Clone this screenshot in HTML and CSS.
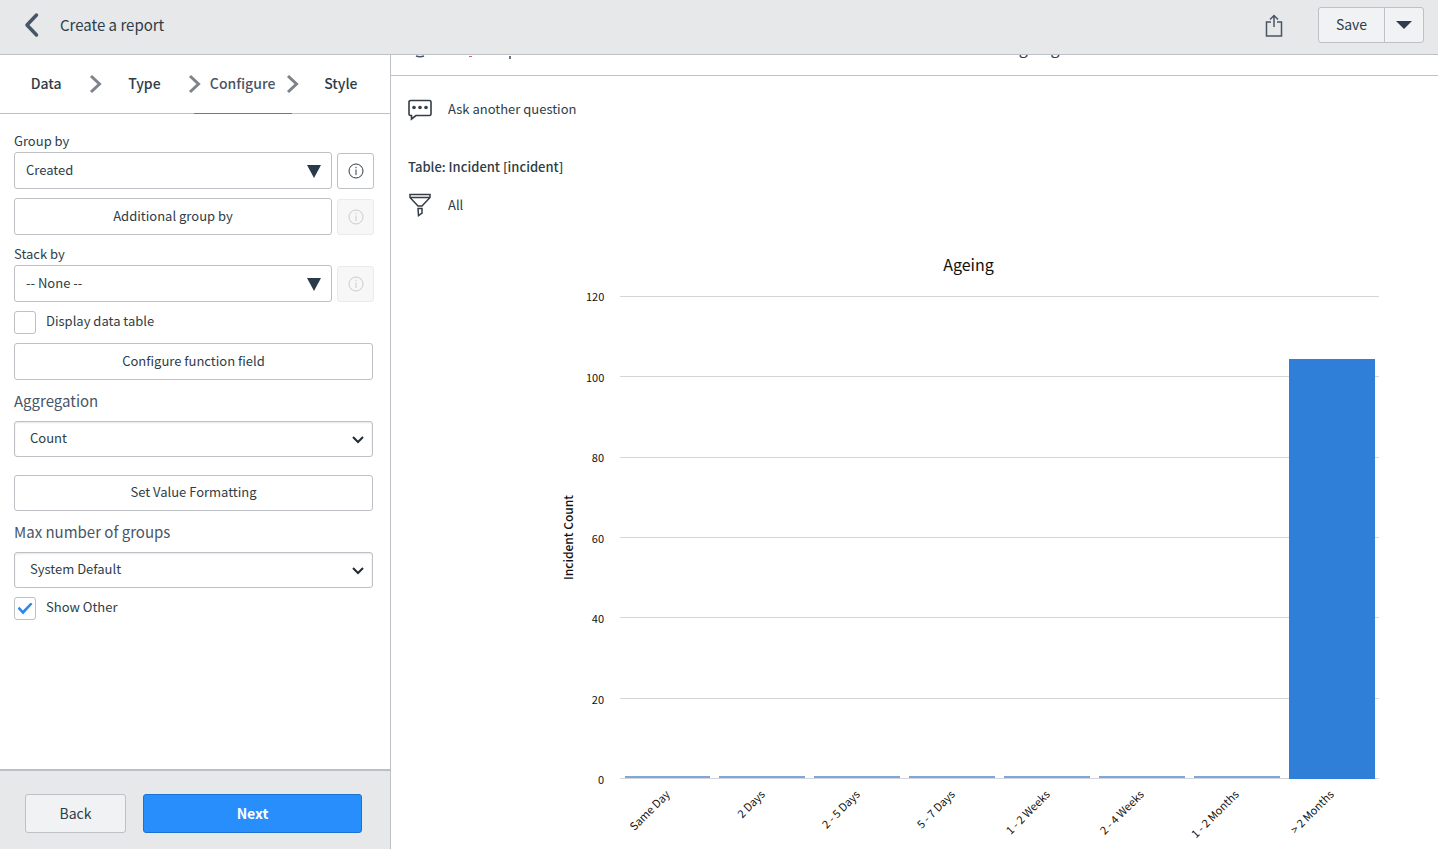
FILE: index.html
```html
<!DOCTYPE html>
<html lang="en">
<head>
  <meta charset="UTF-8">
  <meta name="viewport" content="width=device-width, initial-scale=1.0">
  <title>Create a report</title>
  <link rel="stylesheet" href="styles.css">
</head>
<body>
  <!-- Top bar -->
  <header class="topbar">
    <button class="icon-btn back-arrow" type="button" aria-label="Go back">
      <svg width="16" height="26" viewBox="0 0 16 26"><path d="M12.500 3 L3 13 L12.500 23" fill="none" stroke="#485566" stroke-width="3.500" stroke-linecap="round" stroke-linejoin="round"/></svg>
    </button>
    <h1>Create a report</h1>
    <button class="icon-btn share" type="button" aria-label="Share">
      <svg width="18" height="24" viewBox="0 0 18 24" fill="none" stroke="#485566" stroke-width="1.500"><path d="M6 9 H1.500 V23 H16.500 V9 H12"/><path d="M9 14 V3 M5 6.500 L9 2.500 L13 6.500"/></svg>
    </button>
    <div class="save-group">
      <button class="save" type="button">Save</button>
      <button class="save-more" type="button" aria-label="More save options">
        <svg width="16" height="8" viewBox="0 0 16 8"><path d="M0 0 H16 L8 8 Z" fill="#2e3d4f"/></svg>
      </button>
    </div>
  </header>

  <div class="layout">
    <!-- Configuration panel -->
    <aside class="sidebar">
      <nav class="steps-bar">
        <ol class="steps">
          <li><a href="#data">Data</a><svg class="chevron" width="13" height="20" viewBox="0 0 13 20"><path d="M2 2 L10.500 10 L2 18"/></svg></li>
          <li><a href="#type">Type</a><svg class="chevron" width="13" height="20" viewBox="0 0 13 20"><path d="M2 2 L10.500 10 L2 18"/></svg></li>
          <li class="active"><a href="#configure">Configure</a><svg class="chevron" width="13" height="20" viewBox="0 0 13 20"><path d="M2 2 L10.500 10 L2 18"/></svg></li>
          <li><a href="#style">Style</a></li>
        </ol>
      </nav>

      <form class="config">
        <label class="field-label" for="group-by">Group by</label>
        <div class="row">
          <div class="select-wrap solid">
            <select id="group-by"><option>Created</option></select>
            <svg width="14" height="13" viewBox="0 0 14 13"><path d="M0 0 H14 L7 13 Z" fill="#2b3a4a"/></svg>
          </div>
          <button class="info" type="button" aria-label="Group by info">
            <svg width="16" height="16" viewBox="0 0 16 16"><circle cx="8" cy="8" r="7"/><path d="M8 6.500 V12 M8 3.800 V5.200"/></svg>
          </button>
        </div>
        <div class="row">
          <button class="btn" type="button">Additional group by</button>
          <button class="info" type="button" aria-label="Additional group by info" disabled>
            <svg width="16" height="16" viewBox="0 0 16 16"><circle cx="8" cy="8" r="7"/><path d="M8 6.500 V12 M8 3.800 V5.200"/></svg>
          </button>
        </div>

        <label class="field-label" for="stack-by">Stack by</label>
        <div class="row">
          <div class="select-wrap solid">
            <select id="stack-by"><option>-- None --</option></select>
            <svg width="14" height="13" viewBox="0 0 14 13"><path d="M0 0 H14 L7 13 Z" fill="#2b3a4a"/></svg>
          </div>
          <button class="info" type="button" aria-label="Stack by info" disabled>
            <svg width="16" height="16" viewBox="0 0 16 16"><circle cx="8" cy="8" r="7"/><path d="M8 6.500 V12 M8 3.800 V5.200"/></svg>
          </button>
        </div>

        <div class="check">
          <input type="checkbox" id="data-table">
          <label for="data-table">Display data table</label>
        </div>
        <button class="btn" type="button">Configure function field</button>

        <label class="section-label" for="aggregation">Aggregation</label>
        <div class="select-wrap native">
          <select id="aggregation"><option>Count</option></select>
          <svg width="12" height="8" viewBox="0 0 12 8"><path d="M1 1 L6 6 L11 1" fill="none" stroke="#222b35" stroke-width="2"/></svg>
        </div>
        <button class="btn formatting" type="button">Set Value Formatting</button>

        <label class="section-label" for="max-groups">Max number of groups</label>
        <div class="select-wrap native">
          <select id="max-groups"><option>System Default</option></select>
          <svg width="12" height="8" viewBox="0 0 12 8"><path d="M1 1 L6 6 L11 1" fill="none" stroke="#222b35" stroke-width="2"/></svg>
        </div>
        <div class="check">
          <input type="checkbox" id="show-other" checked>
          <label for="show-other">Show Other</label>
        </div>
      </form>

      <footer class="sidebar-footer">
        <button class="back" type="button">Back</button>
        <button class="next" type="button">Next</button>
      </footer>
    </aside>

    <!-- Report preview -->
    <main class="preview">
      <div class="report-title">
        <svg width="110" height="20" viewBox="0 0 110 20" fill="none"><path d="M8 1 Q12 2.500 16 1" stroke="#485566" stroke-width="1.500"/><path d="M61 1.500 H64" stroke="#d9605a"/><path d="M102 1 V4" stroke="#6b7480" stroke-width="2"/></svg>
        <span class="report-name">Ageing</span>
      </div>

      <div class="question">
        <svg width="24" height="22" viewBox="0 0 24 22"><path d="M3 1.500 H21.500 Q23 1.500 23 3 V15 Q23 16.500 21.500 16.500 H8 L3.500 20 V16.500 H2.500 Q1 16.500 1 15 V3 Q1 1.500 3 1.500 Z" fill="none" stroke="#343d47" stroke-width="1.600"/><g fill="#343d47"><circle cx="6" cy="8.500" r="1.800"/><circle cx="12" cy="8.500" r="1.800"/><circle cx="18" cy="8.500" r="1.800"/></g></svg>
        <a href="#ask">Ask another question</a>
      </div>
      <p class="table-name">Table: Incident [incident]</p>
      <div class="filter">
        <svg width="24" height="24" viewBox="0 0 24 24" fill="none" stroke="#343d47" stroke-width="1.500"><path d="M2 1.500 H22 V4.500 L14 13 H10 L2 4.500 Z M2 4.500 H22"/><path d="M10 15.500 H14 V20 L10.500 22.500 Z"/></svg>
        <a href="#filter">All</a>
      </div>

      <figure class="chart">
        <figcaption>Ageing</figcaption>
        <div class="chart-body">
          <div class="y-title">Incident Count</div>
          <div class="y-ticks">
            <span>120</span><span>100</span><span>80</span><span>60</span><span>40</span><span>20</span><span>0</span>
          </div>
          <div class="plot">
            <div class="grid-lines"><i></i><i></i><i></i><i></i><i></i><i></i><i></i></div>
            <div class="bars">
              <div class="bar low"></div>
              <div class="bar low"></div>
              <div class="bar low"></div>
              <div class="bar low"></div>
              <div class="bar low"></div>
              <div class="bar low"></div>
              <div class="bar low"></div>
              <div class="bar" style="height: 87%"></div>
            </div>
          </div>
          <div class="x-labels">
            <span>Same Day</span>
            <span>2 Days</span>
            <span>2 - 5 Days</span>
            <span>5 - 7 Days</span>
            <span>1 - 2 Weeks</span>
            <span>2 - 4 Weeks</span>
            <span>1 - 2 Months</span>
            <span>&gt; 2 Months</span>
          </div>
        </div>
      </figure>
    </main>
  </div>
</body>
</html>
```
FILE: styles.css
```css
* {
  margin: 0;
  padding: 0;
  box-sizing: border-box;
}

body {
  display: flex;
  flex-direction: column;
  height: 100vh;
  overflow: hidden;
  background: #fff;
  color: #2e3d47;
  font-family: "Noto Sans CJK SC", "Open Sans", sans-serif;
  font-size: 13px;
  line-height: 20px;
}

button,
select {
  font: inherit;
  color: inherit;
  cursor: pointer;
}

a {
  color: inherit;
  text-decoration: none;
}

svg {
  display: block;
  flex-shrink: 0;
}

/* Top bar */
.topbar {
  display: flex;
  align-items: center;
  flex-shrink: 0;
  height: 55px;
  padding: 0 14px 4px 24px;
  background: #e6e8ea;
  border-bottom: 1px solid #bdc0c4;
}

.topbar h1 {
  margin-left: 20px;
  margin-right: auto;
  font-size: 15px;
  font-weight: 400;
}

.icon-btn {
  background: transparent;
  border: none;
}

.share {
  margin-right: 35px;
}

.save-group {
  display: flex;
  height: 36px;
  background: #f1f2f4;
  border: 1px solid #bdc0c4;
  border-radius: 3px;
}

.save-group button {
  background: transparent;
  border: none;
}

.save-group .save {
  width: 65px;
  padding-bottom: 2px;
  font-size: 14px;
}

.save-group .save-more {
  display: flex;
  align-items: center;
  justify-content: center;
  width: 39px;
  border-left: 1px solid #bdc0c4;
}

.layout {
  display: flex;
  flex: 1;
  min-height: 0;
}

/* Sidebar */
.sidebar {
  display: flex;
  flex-direction: column;
  flex-shrink: 0;
  width: 391px;
  border-right: 1px solid #bdc0c4;
}

.steps-bar {
  flex-shrink: 0;
}

.steps {
  display: flex;
  height: 59px;
  margin-left: -3px;
  list-style: none;
}

.steps li {
  display: grid;
  grid-template-columns: 1fr auto 1fr;
  align-items: center;
  flex: 1;
  border-bottom: 1px solid #bdc0c4;
  font-size: 14px;
  font-weight: 500;
}

.steps a {
  grid-column: 2;
  padding-bottom: 2px;
}

.steps .active {
  border-bottom-color: #1f8fe0;
  color: #485566;
}

.chevron {
  justify-self: end;
  margin-right: -7px;
  fill: none;
  stroke: #7d838b;
  stroke-width: 3;
}

.config {
  flex: 1;
  min-height: 0;
  padding: 17px 17px 0 14px;
  overflow: hidden;
}

.field-label {
  display: block;
  margin-bottom: 1px;
}

.row {
  display: flex;
  align-items: center;
  gap: 5px;
  margin: 0 -1px 9px 0;
}

.select-wrap {
  display: grid;
  flex: 1;
  align-items: center;
}

.select-wrap select,
.select-wrap svg {
  grid-area: 1 / 1;
}

.select-wrap select {
  width: 100%;
  height: 37px;
  padding: 0 11px 2px;
  appearance: none;
  background: #fff;
  border: 1px solid #bdc0c4;
  border-radius: 3px;
}

.select-wrap svg {
  justify-self: end;
  margin: 2px 11px 0 0;
  pointer-events: none;
}

.native select {
  height: 36px;
  padding: 0 15px 2px;
  box-shadow: inset 0 1px 2px rgba(0, 0, 0, 0.1);
}

.native svg {
  margin-right: 9px;
}

.btn {
  width: 100%;
  height: 37px;
  padding-bottom: 2px;
  background: #fff;
  border: 1px solid #bdc0c4;
  border-radius: 3px;
}

.row .btn {
  flex: 1;
}

.formatting {
  height: 36px;
  margin-top: 18px;
}

.info {
  display: flex;
  align-items: center;
  justify-content: center;
  width: 37px;
  height: 36px;
  background: #fff;
  border: 1px solid #bdc0c4;
  border-radius: 3px;
}

.info svg {
  fill: none;
  stroke: #2e3d47;
  stroke-width: 1;
}

.info:disabled {
  background: #f7f7f8;
  border-color: #ebebed;
}

.info:disabled svg {
  stroke: #c9cbce;
}

.check {
  display: flex;
  gap: 10px;
  margin: 9px 0;
}

.check input {
  display: grid;
  place-items: center;
  width: 22px;
  height: 23px;
  appearance: none;
  border: 1px solid #bdc0c4;
  border-radius: 3px;
}

.check input:checked::before {
  content: "";
  width: 15px;
  height: 12px;
  background: #2f86f0;
  clip-path: polygon(0 50%, 13% 36%, 36% 66%, 88% 0, 100% 12%, 37% 100%);
}

.section-label {
  display: block;
  margin: 9px 0 8px;
  font-size: 15px;
  line-height: 24px;
  color: #485566;
}

.sidebar-footer {
  display: flex;
  flex-shrink: 0;
  gap: 17px;
  padding: 23px 28px 16px 25px;
  background: #e6e8ea;
  border-top: 2px solid #bdbec3;
}

.sidebar-footer button {
  height: 39px;
  padding-bottom: 2px;
  border-radius: 3px;
  font-size: 14px;
}

.back {
  width: 101px;
  background: #f1f2f4;
  border: 1px solid #bdc0c4;
}

.next {
  flex: 1;
  background: #278efc;
  border: 1px solid #1a72d2;
}

.sidebar-footer .next {
  color: #fff;
  font-weight: 700;
}

/* Preview */
.preview {
  flex: 1;
  min-width: 0;
  overflow: hidden;
}

/* title row is scrolled under the top bar */
.report-title {
  display: flex;
  align-items: flex-end;
  height: 21px;
  padding: 0 17px;
  overflow: hidden;
  border-bottom: 1px solid #bdc0c4;
  font-size: 16px;
}

.report-name {
  margin-left: 491px;
  padding-bottom: 18px;
}

.question,
.filter {
  display: flex;
  align-items: center;
  gap: 16px;
  padding: 0 17px;
}

.question {
  margin-top: 23px;
}

.question a {
  padding-bottom: 2px;
}

.table-name {
  margin: 36px 17px 16px;
  font-weight: 500;
}

.chart {
  margin: 35px 59px 0 167px;
  color: #111;
}

.chart figcaption {
  margin-bottom: 20px;
  font-size: 16px;
  line-height: 24px;
  text-align: center;
}

.chart-body {
  display: grid;
  grid-template-columns: 20px 18px 1fr;
  column-gap: 8px;
  height: 483px;
}

.y-title {
  align-self: center;
  justify-self: center;
  writing-mode: vertical-rl;
  transform: rotate(180deg);
  font-size: 12px;
  font-weight: 500;
}

.y-ticks {
  display: flex;
  flex-direction: column;
  justify-content: space-between;
  margin: -10px 0;
  font-size: 11px;
  text-align: right;
}

.plot {
  display: grid;
  height: 483px;
  margin-left: 8px;
}

.grid-lines,
.bars {
  grid-area: 1 / 1;
}

.grid-lines {
  display: flex;
  flex-direction: column;
  justify-content: space-between;
}

.grid-lines i {
  height: 1px;
  background: #d3d5d8;
}

.bars {
  display: flex;
  align-items: flex-end;
  justify-content: space-around;
}

.bar {
  width: calc(12.5% - 9px);
  background: #2f7ed8;
}

.bar.low {
  height: 2px;
  margin-bottom: 1px;
  background: #7fa6da;
}

.x-labels {
  grid-column: 3;
  display: flex;
  margin: 0 6px 0 2px;
  padding-top: 7px;
  font-size: 11px;
  line-height: 16px;
  white-space: nowrap;
}

.x-labels span {
  display: flex;
  justify-content: flex-end;
  flex: 1;
  width: 0;
  transform: translateX(-50%) rotate(-45deg);
  transform-origin: top right;
}
```
